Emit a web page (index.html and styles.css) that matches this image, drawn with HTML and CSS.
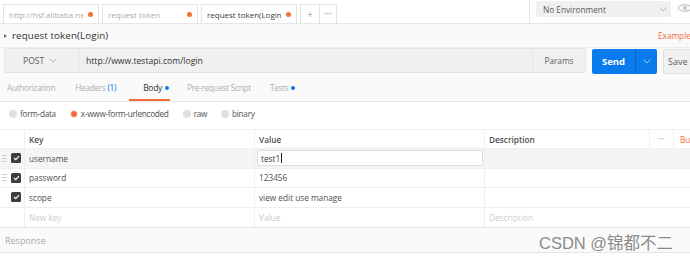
FILE: index.html
```html
<!DOCTYPE html>
<html>
<head>
<meta charset="utf-8">
<link rel="stylesheet" href="styles.css">
</head>
<body>
<div class="app">
  <div class="topbar">
    <div class="tabs">
      <div class="tab"><span class="tab-label">http://hsf.alibaba.net</span><span class="dot"></span></div>
      <div class="tab"><span class="tab-label">request token</span><span class="dot"></span></div>
      <div class="tab active"><span class="tab-label">request token(Login)</span><span class="dot"></span></div>
      <div class="tab-tools"><span class="tool plus">+</span><span class="tool more">•••</span></div>
    </div>
    <div class="env-area">
      <div class="env-select">
        <span>No Environment</span>
        <svg class="chev" width="8" height="5" viewBox="0 0 8 5"><polyline points="0.5,0.5 4,4 7.5,0.5" fill="none" stroke="#b0b0b0" stroke-width="0.9"/></svg>
      </div>
      <svg class="eye" width="16" height="10" viewBox="0 0 16 10"><path d="M1 5 C4 0.5 12 0.5 15 5 C12 9.5 4 9.5 1 5 Z" fill="none" stroke="#c8c8c8" stroke-width="1.2"/><circle cx="8" cy="5" r="2.2" fill="#c8c8c8"/></svg>
    </div>
  </div>

  <div class="titlebar">
    <span class="caret"></span>
    <span class="title">request token(Login)</span>
    <span class="examples">Examples (0)</span>
  </div>

  <div class="urlrow">
    <div class="urlgroup">
      <div class="method"><span>POST</span><svg width="8" height="5" viewBox="0 0 8 5"><polyline points="0.5,0.5 4,4 7.5,0.5" fill="none" stroke="#b0b0b0" stroke-width="0.9"/></svg></div>
      <div class="url">http://www.testapi.com/login</div>
      <div class="params">Params</div>
    </div>
    <div class="send">
      <span class="send-label">Send</span>
      <span class="send-drop"><svg width="8" height="5" viewBox="0 0 8 5"><polyline points="0.5,0.5 4,4 7.5,0.5" fill="none" stroke="#a9cff7" stroke-width="0.9"/></svg></span>
    </div>
    <div class="save">Save</div>
  </div>

  <div class="reqtabs">
    <span class="rtab t-auth">Authorization</span>
    <span class="rtab t-head">Headers <span class="count">(1)</span></span>
    <span class="rtab t-body active">Body <span class="bdot"></span></span>
    <span class="rtab t-pre">Pre-request Script</span>
    <span class="rtab t-tests">Tests <span class="bdot"></span></span>
  </div>

  <div class="bodytypes">
    <span class="radio"><span class="circle"></span>form-data</span>
    <span class="radio on"><span class="circle"></span>x-www-form-urlencoded</span>
    <span class="radio"><span class="circle"></span>raw</span>
    <span class="radio"><span class="circle"></span>binary</span>
  </div>

  <div class="kv">
    <div class="kv-row head">
      <div class="c-check"></div>
      <div class="c-key">Key</div>
      <div class="c-val">Value</div>
      <div class="c-desc">
        <span class="desc-text">Description</span>
        <span class="dots">•••</span>
        <span class="bulk">Bulk Edit</span>
      </div>
    </div>
    <div class="kv-row hover">
      <div class="c-check"><span class="handle"></span><span class="cb"><svg width="7" height="6" viewBox="0 0 7 6"><polyline points="1,3 2.8,4.6 6,1.2" fill="none" stroke="#fff" stroke-width="1.2"/></svg></span></div>
      <div class="c-key">username</div>
      <div class="c-val"><div class="input">test1<span class="caretline"></span></div></div>
      <div class="c-desc"></div>
    </div>
    <div class="kv-row">
      <div class="c-check"><span class="handle"></span><span class="cb"><svg width="7" height="6" viewBox="0 0 7 6"><polyline points="1,3 2.8,4.6 6,1.2" fill="none" stroke="#fff" stroke-width="1.2"/></svg></span></div>
      <div class="c-key">password</div>
      <div class="c-val">123456</div>
      <div class="c-desc"></div>
    </div>
    <div class="kv-row">
      <div class="c-check"><span class="handle blank"></span><span class="cb"><svg width="7" height="6" viewBox="0 0 7 6"><polyline points="1,3 2.8,4.6 6,1.2" fill="none" stroke="#fff" stroke-width="1.2"/></svg></span></div>
      <div class="c-key">scope</div>
      <div class="c-val">view edit use manage</div>
      <div class="c-desc"></div>
    </div>
    <div class="kv-row new">
      <div class="c-check"></div>
      <div class="c-key">New key</div>
      <div class="c-val">Value</div>
      <div class="c-desc">Description</div>
    </div>
  </div>

  <div class="response">Response</div>
</div>
<div class="watermark">CSDN @锦都不二</div>
</body>
</html>
```

FILE: styles.css
```css
* { box-sizing: border-box; margin: 0; padding: 0; }
html, body { width: 690px; height: 259px; overflow: hidden; background: #fff; }
body { font-family: "Open Sans", sans-serif; font-size: 8.25px; color: #505050; position: relative; }
.app { width: 704px; }

/* top bar */
.topbar { height: 24px; display: flex; border-bottom: 1px solid #e6e6e6; background: #fff; }
.tabs { display: flex; gap: 3px; padding-left: 3px; align-items: flex-end; flex: none; }
.tab { width: 96px; height: 19px; border: 1px solid #e3e3e3; border-bottom: none; display: flex; align-items: center; padding: 0 5px 0 5px; gap: 5px; background: #fff; flex: none; font-size: 8px; }
.tab-label { flex: 1; overflow: hidden; white-space: nowrap; color: #ababab; }
.tab.active .tab-label { color: #3c3c3c; }
.dot { width: 5px; height: 5px; border-radius: 50%; background: #f4742b; flex: none; }
.tab-tools { display: flex; height: 19px; border: 1px solid #e3e3e3; border-bottom: none; flex: none; }
.tool { display: flex; align-items: center; justify-content: center; color: #a0a0a0; }
.plus { width: 19px; border-right: 1px solid #e3e3e3; font-size: 10px; }
.more { width: 16px; font-size: 6px; letter-spacing: 0.3px; }
.env-area { margin-left: auto; width: 175px; flex: none; border-left: 1px solid #e6e6e6; display: flex; align-items: flex-start; padding-left: 6px; gap: 6px; }
.env-select { width: 135px; height: 16px; margin-top: 1px; background: #f0f0f0; border-radius: 0 0 2px 2px; display: flex; align-items: center; justify-content: space-between; padding: 0 4px 0 7px; color: #5a5a5a; flex: none; }
.eye { margin-top: 3px; flex: none; }

/* title */
.titlebar { height: 24px; background: #fafafa; display: flex; align-items: center; padding-left: 4px; border-bottom: 1px solid #ececec; }
.caret { width: 0; height: 0; border-left: 3px solid #707070; border-top: 2px solid transparent; border-bottom: 2px solid transparent; margin-right: 5px; }
.title { font-size: 9.8px; color: #303030; letter-spacing: 0.1px; }
.examples { margin-left: auto; color: #f26b3a; font-size: 8.25px; margin-right: -34px; width: 80px; flex: none; }

/* url row */
.urlrow { height: 26px; background: #fafafa; display: flex; padding-left: 4px; align-items: flex-start; }
.urlgroup { display: flex; height: 25px; border: 1px solid #e3e3e3; background: #f0f0f0; border-radius: 2px; width: 582px; flex: none; }
.method { width: 74px; border-right: 1px solid #e3e3e3; display: flex; align-items: center; padding-left: 18px; gap: 5px; color: #606060; font-size: 8.6px; flex: none; }
.url { flex: 1; display: flex; align-items: center; padding-left: 7px; color: #333; font-size: 8.6px; }
.params { width: 53px; border-left: 1px solid #e3e3e3; display: flex; align-items: center; justify-content: center; color: #606060; flex: none; }
.send { margin-left: 6px; width: 65px; height: 25px; margin-top: 1px; background: #097bed; border-radius: 2px; display: flex; color: #fff; flex: none; }
.send-label { width: 44px; display: flex; align-items: center; justify-content: center; font-weight: 700; font-size: 9.5px; border-right: 1px solid #0a66c4; }
.send-drop { flex: 1; display: flex; align-items: center; justify-content: center; }
.save { margin-left: 6px; height: 25px; margin-top: 1px; width: 50px; background: #f0f0f0; border: 1px solid #e0e0e0; border-radius: 2px; display: flex; align-items: center; padding-left: 4px; color: #606060; font-size: 9px; flex: none; }

/* request tabs */
.reqtabs { height: 28px; background: #fafafa; border-bottom: 1px solid #e6e6e6; display: flex; align-items: stretch; padding-left: 7px; font-size: 8.25px; letter-spacing: -0.3px; }
.rtab { display: flex; align-items: center; color: #b0b0b0; white-space: nowrap; }
.rtab .count { color: #097bed; margin-left: 2px; }
.t-auth { margin-right: 20px; }
.t-head { margin-right: 13px; }
.t-body { padding-left: 14px; padding-right: 1px; color: #303030; border-bottom: 2px solid #f26b3a; padding-top: 2px; margin-right: 17px; font-size: 8.5px; }
.t-pre { margin-right: 19px; }
.bdot { width: 4px; height: 4px; border-radius: 50%; background: #097bed; margin-left: 3px; }

/* body types */
.bodytypes { height: 23px; display: flex; align-items: center; padding-left: 9px; gap: 14px; font-size: 8.25px; letter-spacing: -0.3px; }
.radio { display: flex; align-items: center; gap: 3px; color: #505050; }
.circle { width: 8px; height: 8px; border-radius: 50%; background: #e0e0e0; }
.radio.on .circle { background: #f26b3a; border: 1.5px solid #fde5dc; }

/* key value table */
.kv { margin-top: 4px; border-top: 1px solid #eeeeee; }
.kv-row { display: grid; grid-template-columns: 24px 230px 230px 1fr; height: 19.5px; border-bottom: 1px solid #efefef; }
.kv-row.head { height: 19px; color: #505050; font-weight: 600; }
.kv-row > div { display: flex; align-items: center; border-left: 1px solid #efefef; padding-left: 4px; }
.kv-row > .c-check { border-left: none; padding-left: 2px; gap: 4px; }
.kv-row.hover { background: #f5f5f5; }
.c-desc { overflow: hidden; }
.desc-text { width: 160px; flex: none; }
.dots { width: 25px; height: 100%; flex: none; display: flex; align-items: center; justify-content: center; border-left: 1px solid #efefef; border-right: 1px solid #efefef; color: #b8b8b8; font-size: 6px; font-weight: 400; }
.bulk { color: #f26b3a; padding-left: 6px; font-weight: 400; white-space: nowrap; flex: none; }
.handle { width: 5px; height: 7px; border-top: 1px solid #cfcfcf; border-bottom: 1px solid #cfcfcf; flex: none; }
.handle::after { content: ""; display: block; height: 1px; background: #cfcfcf; margin-top: 2px; }
.handle.blank { border-color: transparent; }
.handle.blank::after { background: transparent; }
.cb { width: 10px; height: 10px; background: #3d3d3d; border-radius: 1.5px; display: flex; align-items: center; justify-content: center; flex: none; }
.input { width: 226px; height: 16px; margin-left: -2px; background: #fff; border: 1px solid #dedede; border-radius: 2px; display: flex; align-items: center; padding-left: 3px; color: #333; }
.caretline { width: 1px; height: 10px; background: #222; margin-left: 1px; }
.kv-row.new { color: #cdcdcd; border-bottom: none; }

/* response */
.response { height: 26px; background: #fafafa; border-top: 1px solid #e6e6e6; border-bottom: 1px solid #e6e6e6; display: flex; align-items: center; padding-left: 5px; color: #a8a8a8; font-size: 9px; }

.watermark { position: absolute; left: 539px; top: 230px; font-family: "Liberation Sans", "Noto Sans CJK SC", sans-serif; font-size: 16.5px; color: #8a8a8a; white-space: nowrap; }
```
